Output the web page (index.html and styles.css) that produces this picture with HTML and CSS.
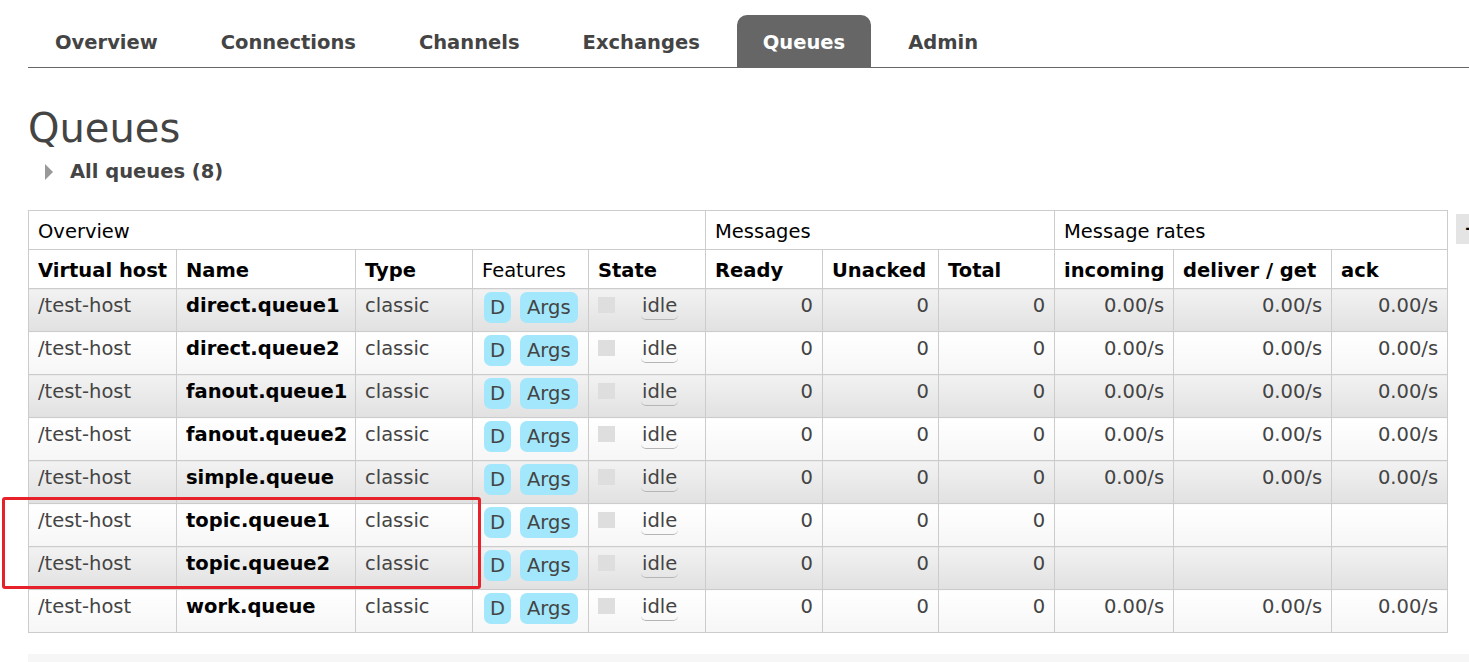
FILE: index.html
```html
<!DOCTYPE html>
<html lang="en">
<head>
<meta charset="utf-8">
<title>Queues</title>
<link rel="stylesheet" href="styles.css">
</head>
<body>
<div class="page">
  <ul class="tabs">
    <li class="tab">Overview</li>
    <li class="tab">Connections</li>
    <li class="tab">Channels</li>
    <li class="tab">Exchanges</li>
    <li class="tab active">Queues</li>
    <li class="tab">Admin</li>
  </ul>
  <main class="content">
    <h1 class="title">Queues</h1>
    <div class="toggle"><span class="tri"></span><span class="toggle-label">All queues (8)</span></div>
    <div class="table-wrap">
      <table class="list">
        <colgroup>
          <col style="width:148px"><col style="width:179px"><col style="width:117px"><col style="width:116px"><col style="width:117px"><col style="width:117px"><col style="width:116px"><col style="width:116px"><col style="width:119px"><col style="width:158px"><col style="width:116px">
        </colgroup>
        <thead>
          <tr class="group">
            <th colspan="5">Overview</th>
            <th colspan="3">Messages</th>
            <th colspan="3">Message rates</th>
          </tr>
          <tr class="cols">
            <th>Virtual host</th><th>Name</th><th>Type</th><th class="plain">Features</th><th>State</th>
            <th>Ready</th><th>Unacked</th><th>Total</th>
            <th>incoming</th><th>deliver / get</th><th>ack</th>
          </tr>
        </thead>
        <tbody>
          <tr class="alt1"><td>/test-host</td><td class="name">direct.queue1</td><td>classic</td><td><span class="badge">D</span><span class="badge wide">Args</span></td><td><span class="sq"></span><span class="idle">idle</span></td><td class="r">0</td><td class="r">0</td><td class="r">0</td><td class="r">0.00/s</td><td class="r">0.00/s</td><td class="r">0.00/s</td></tr>
          <tr class="alt2"><td>/test-host</td><td class="name">direct.queue2</td><td>classic</td><td><span class="badge">D</span><span class="badge wide">Args</span></td><td><span class="sq"></span><span class="idle">idle</span></td><td class="r">0</td><td class="r">0</td><td class="r">0</td><td class="r">0.00/s</td><td class="r">0.00/s</td><td class="r">0.00/s</td></tr>
          <tr class="alt1"><td>/test-host</td><td class="name">fanout.queue1</td><td>classic</td><td><span class="badge">D</span><span class="badge wide">Args</span></td><td><span class="sq"></span><span class="idle">idle</span></td><td class="r">0</td><td class="r">0</td><td class="r">0</td><td class="r">0.00/s</td><td class="r">0.00/s</td><td class="r">0.00/s</td></tr>
          <tr class="alt2"><td>/test-host</td><td class="name">fanout.queue2</td><td>classic</td><td><span class="badge">D</span><span class="badge wide">Args</span></td><td><span class="sq"></span><span class="idle">idle</span></td><td class="r">0</td><td class="r">0</td><td class="r">0</td><td class="r">0.00/s</td><td class="r">0.00/s</td><td class="r">0.00/s</td></tr>
          <tr class="alt1"><td>/test-host</td><td class="name">simple.queue</td><td>classic</td><td><span class="badge">D</span><span class="badge wide">Args</span></td><td><span class="sq"></span><span class="idle">idle</span></td><td class="r">0</td><td class="r">0</td><td class="r">0</td><td class="r">0.00/s</td><td class="r">0.00/s</td><td class="r">0.00/s</td></tr>
          <tr class="alt2"><td>/test-host</td><td class="name">topic.queue1</td><td>classic</td><td><span class="badge">D</span><span class="badge wide">Args</span></td><td><span class="sq"></span><span class="idle">idle</span></td><td class="r">0</td><td class="r">0</td><td class="r">0</td><td class="r"></td><td class="r"></td><td class="r"></td></tr>
          <tr class="alt1"><td>/test-host</td><td class="name">topic.queue2</td><td>classic</td><td><span class="badge">D</span><span class="badge wide">Args</span></td><td><span class="sq"></span><span class="idle">idle</span></td><td class="r">0</td><td class="r">0</td><td class="r">0</td><td class="r"></td><td class="r"></td><td class="r"></td></tr>
          <tr class="alt2"><td>/test-host</td><td class="name">work.queue</td><td>classic</td><td><span class="badge">D</span><span class="badge wide">Args</span></td><td><span class="sq"></span><span class="idle">idle</span></td><td class="r">0</td><td class="r">0</td><td class="r">0</td><td class="r">0.00/s</td><td class="r">0.00/s</td><td class="r">0.00/s</td></tr>
        </tbody>
      </table>
      <span class="colsel">+/-</span>
    </div>
    <div class="next-section"></div>
  </main>
  <div class="annot"></div>
</div>
</body>
</html>
```
FILE: styles.css
```css
html, body {
  margin: 0;
  padding: 0;
  background: #fff;
  overflow: hidden;
}
body {
  font-family: "DejaVu Sans", Verdana, sans-serif;
  font-size: 19.5px;
  color: #444;
}
.page {
  position: relative;
  width: 1469px;
  height: 662px;
  overflow: hidden;
}
.tabs {
  list-style: none;
  margin: 0 0 0 28px;
  padding: 15px 0 0 1px;
  display: flex;
  border-bottom: 1px solid #666;
}
.tab {
  height: 49px;
  line-height: 49px;
  padding: 3px 26px 0 26px;
  margin-right: 11px;
  font-weight: bold;
  color: #444;
  border-radius: 10px 10px 0 0;
}
.tab.active {
  background: #666;
  color: #fff;
}
.content {
  padding-left: 28px;
}
.title {
  margin: 36px 0 0 0;
  font-size: 40px;
  line-height: 48px;
  font-weight: normal;
  color: #444;
}
.toggle {
  margin-top: 8px;
  display: flex;
  align-items: center;
  height: 23px;
  padding-left: 17px;
}
.tri {
  width: 0;
  height: 0;
  border-top: 8px solid transparent;
  border-bottom: 8px solid transparent;
  border-left: 8px solid #999;
  margin-right: 17px;
}
.toggle-label {
  font-weight: bold;
  line-height: 23px;
  color: #444;
}
.table-wrap {
  margin-top: 27px;
  display: flex;
  align-items: flex-start;
  gap: 8px;
}
.list {
  border-collapse: collapse;
  table-layout: fixed;
  width: 1419px;
  flex: none;
}
.list th, .list td {
  border: 1px solid #ccc;
  line-height: 23px;
  vertical-align: top;
  text-align: left;
  white-space: nowrap;
  overflow: visible;
}
.list th {
  padding: 9px 9px 0 9px;
  height: 29px;
  color: #000;
  background: #fff;
  font-weight: bold;
}
.list tr.group th {
  font-weight: normal;
}
.list th.plain {
  font-weight: normal;
}
.list td {
  padding: 5px 9px 0 9px;
  height: 37px;
  color: #444;
}
.list td.name {
  color: #000;
  font-weight: bold;
}
.list td.r {
  text-align: right;
}
.list tr.alt1 td {
  background: linear-gradient(#f2f2f2, #e1e1e1);
}
.list tr.alt2 td {
  background: linear-gradient(#ffffff, #f6f6f6);
}
.badge {
  display: inline-block;
  vertical-align: top;
  margin: -2px 9px 0 2px;
  padding: 2px 6px;
  line-height: 27px;
  background: #a2e7fb;
  color: #444;
  border-radius: 7px;
}
.badge.wide {
  margin-left: 0;
  padding: 2px 7px;
}
.sq {
  display: inline-block;
  vertical-align: top;
  width: 17px;
  height: 16px;
  margin-top: 3px;
  background: #dedede;
  margin-right: 27px;
}
.idle {
  position: relative;
  display: inline-block;
  vertical-align: top;
}
.idle::after {
  content: "";
  position: absolute;
  left: -1px;
  right: -1px;
  bottom: -3px;
  height: 4px;
  border-bottom: 1px solid #b5b5b5;
  border-radius: 0 0 7px 7px;
}
.colsel {
  flex: none;
  margin-top: 4px;
  height: 30px;
  line-height: 30px;
  padding: 0 8px;
  background: #e4e4e4;
  color: #000;
  font-weight: bold;
}
.next-section {
  margin-top: 21px;
  height: 40px;
  background: #f6f6f6;
}
.annot {
  position: absolute;
  left: 2px;
  top: 497px;
  width: 479px;
  height: 92px;
  box-sizing: border-box;
  border: 3px solid #e62129;
  border-radius: 3px;
}
```
